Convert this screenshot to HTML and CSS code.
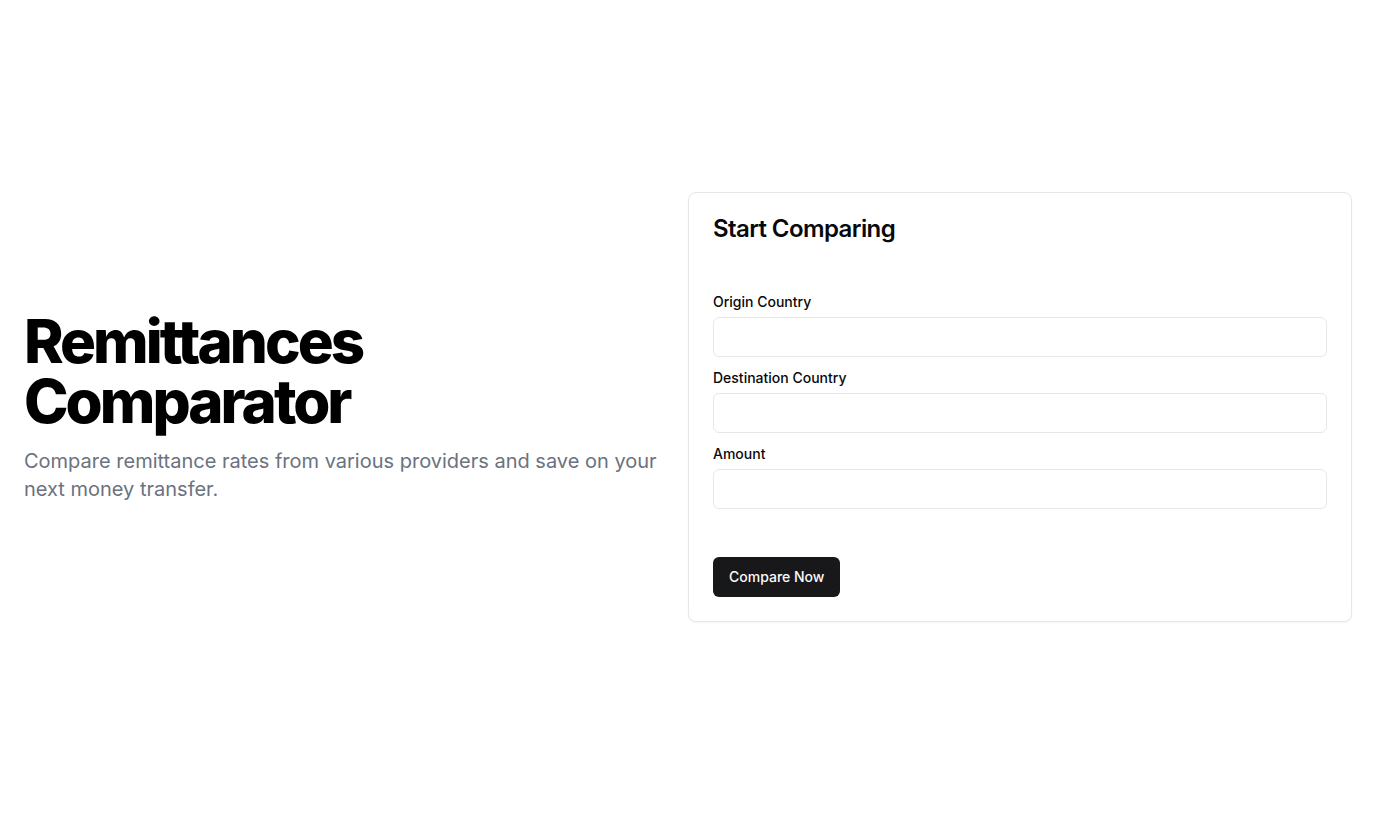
FILE: index.html
```html
<!DOCTYPE html>
<html lang="en">
<head>
<meta charset="utf-8">
<title>Remittances Comparator</title>
<link rel="stylesheet" href="styles.css">
</head>
<body>
<main class="page">
  <section class="intro">
    <h1 class="title">Remittances Comparator</h1>
    <p class="lead">Compare remittance rates from various providers and save on your next money transfer.</p>
  </section>
  <section class="card">
    <h2 class="card-title">Start Comparing</h2>
    <form class="form">
      <div class="field">
        <label class="label" for="origin">Origin Country</label>
        <input class="input" id="origin" type="text">
      </div>
      <div class="field">
        <label class="label" for="dest">Destination Country</label>
        <input class="input" id="dest" type="text">
      </div>
      <div class="field">
        <label class="label" for="amount">Amount</label>
        <input class="input" id="amount" type="text">
      </div>
      <button class="button" type="button">Compare Now</button>
    </form>
  </section>
</main>
</body>
</html>
```

FILE: styles.css
```css
* { box-sizing: border-box; }
html, body { margin: 0; padding: 0; background: #ffffff; }
body {
  font-family: Inter, "Noto Sans", sans-serif;
  color: #09090b;
}
.page {
  min-height: 814px;
  padding: 0 24px;
  display: grid;
  grid-template-columns: 1fr 1fr;
  align-items: center;
}
.intro { padding-right: 24px; }
.title {
  margin: 0;
  font-size: 60px;
  line-height: 60px;
  font-weight: 800;
  letter-spacing: -0.05em;
  color: #000000;
  width: 400px;
}
.lead {
  margin: 16px 0 0;
  font-size: 20px;
  line-height: 28px;
  color: #6b7280;
}
.card {
  border: 1px solid #e5e7eb;
  border-radius: 8px;
  box-shadow: 0 1px 2px rgba(0,0,0,0.05);
  padding: 24px;
  background: #fff;
}
.card-title {
  margin: 0;
  font-size: 24px;
  line-height: 24px;
  font-weight: 600;
  letter-spacing: -0.025em;
}
.form {
  margin-top: 51px;
  display: flex;
  flex-direction: column;
}
.field { display: flex; flex-direction: column; margin-bottom: 11px; }
.field:last-of-type { margin-bottom: 48px; }
.label {
  font-size: 14px;
  line-height: 20px;
  font-weight: 500;
  margin-bottom: 5px;
}
.input {
  height: 40px;
  border: 1px solid #e5e7eb;
  border-radius: 6px;
  background: #fff;
  font: inherit;
  padding: 8px 12px;
}
.button {
  align-self: flex-start;
  height: 40px;
  padding: 0 16px 2px;
  border: none;
  border-radius: 6px;
  background: #18181b;
  color: #fafafa;
  font-family: Inter, sans-serif;
  font-size: 14px;
  font-weight: 500;
}
```
